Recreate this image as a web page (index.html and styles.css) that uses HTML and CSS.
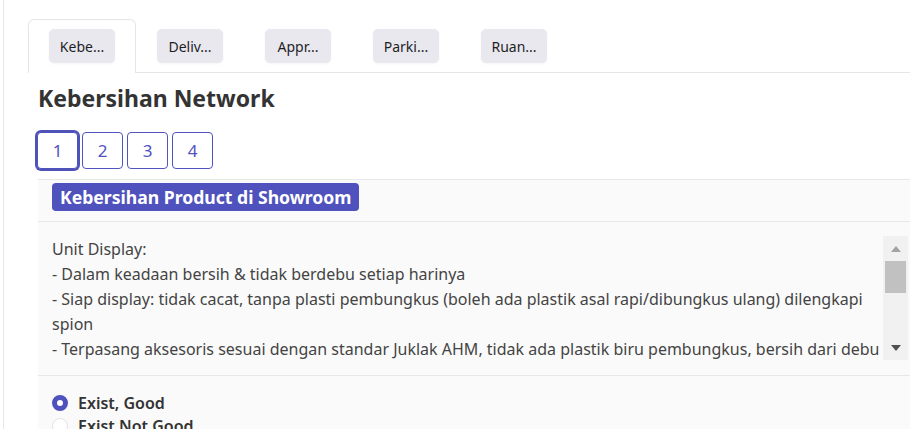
FILE: index.html
```html
<!DOCTYPE html>
<html lang="id">
<head>
<meta charset="utf-8">
<title>Kebersihan Network</title>
<link rel="stylesheet" href="styles.css">
</head>
<body>
<div class="page">
  <div class="tabs">
    <div class="tab active"><span class="tab-btn">Kebe...</span></div>
    <div class="tab"><span class="tab-btn">Deliv...</span></div>
    <div class="tab"><span class="tab-btn">Appr...</span></div>
    <div class="tab"><span class="tab-btn">Parki...</span></div>
    <div class="tab"><span class="tab-btn">Ruan...</span></div>
  </div>
  <div class="panel">
    <h1 class="title">Kebersihan Network</h1>
    <div class="pager">
      <button class="page-btn current">1</button>
      <button class="page-btn">2</button>
      <button class="page-btn">3</button>
      <button class="page-btn">4</button>
    </div>
    <div class="question">
      <div class="q-head"><span class="badge">Kebersihan Product di Showroom</span></div>
      <div class="q-body">
        <div class="desc">Unit Display:<br>- Dalam keadaan bersih &amp; tidak berdebu setiap harinya<br>- Siap display: tidak cacat, tanpa plasti pembungkus (boleh ada plastik asal rapi/dibungkus ulang) dilengkapi spion<br>- Terpasang aksesoris sesuai dengan standar Juklak AHM, tidak ada plastik biru pembungkus, bersih dari debu<br>- Label harga terpasang dengan rapi<br>- Tidak ada goresan pada body unit<br>- Ban dalam kondisi bersih dan hitam<br>- Posisi unit rapi dan sejajar<br>- Lantai di sekitar unit bersih<br>- Brosur tersedia di dekat unit</div>
        <div class="scrollbar" aria-hidden="true">
          <div class="sb-btn">
            <svg width="12" height="8" viewBox="0 0 12 8"><polygon points="6,1 11,7 1,7" fill="#a3a3a3"/></svg>
          </div>
          <div class="sb-track"><div class="sb-thumb"></div></div>
          <div class="sb-btn">
            <svg width="12" height="8" viewBox="0 0 12 8"><polygon points="1,1 11,1 6,7" fill="#505050"/></svg>
          </div>
        </div>
      </div>
      <div class="q-options">
        <label class="option"><span class="radio checked"></span><span class="opt-label">Exist, Good</span></label>
        <label class="option"><span class="radio"></span><span class="opt-label">Exist Not Good</span></label>
      </div>
    </div>
  </div>
</div>
</body>
</html>
```
FILE: styles.css
```css
* { box-sizing: border-box; }
html, body { margin: 0; padding: 0; background: #fff; }
body {
  font-family: "Noto Sans", "Open Sans", sans-serif;
  color: #333;
  overflow: hidden;
  height: 429px;
}
.page {
  margin-left: 3px;
  border-left: 1px solid #e8e8ec;
  height: 429px;
  overflow: hidden;
}
.tabs {
  display: flex;
  margin-left: 24px;
  padding-top: 19px;
  border-bottom: 1px solid #e6e6ea;
}
.tab {
  width: 108px;
  padding: 9px 20px;
  border: 1px solid transparent;
  border-bottom: none;
  border-radius: 6px 6px 0 0;
  display: flex;
}
.tab.active {
  border-color: #e6e6ea;
  background: #fff;
  padding-bottom: 10px;
  margin-bottom: -1px;
}
.tab-btn {
  display: flex;
  align-items: center;
  justify-content: center;
  width: 68px;
  height: 34px;
  background: #e9e8ef;
  border-radius: 5px;
  font-size: 14px;
  color: #1f1f1f;
  box-shadow: 0 1px 3px rgba(0,0,0,0.04);
}
.panel {
  padding-left: 34px;
}
.title {
  margin: 10px 0 0 0;
  font-size: 23px;
  font-weight: 700;
  color: #333;
  line-height: 30px;
}
.pager {
  display: flex;
  gap: 4px;
  margin-top: 19px;
  margin-left: -1px;
}
.page-btn {
  width: 41px;
  height: 37px;
  border: 1px solid #5153bf;
  border-radius: 4px;
  background: #fff;
  color: #5153bf;
  font-family: "Noto Sans", sans-serif;
  font-size: 17px;
  padding: 0;
}
.page-btn.current {
  box-shadow: 0 0 0 2px #4f52b9;
  border-color: #4f52b9;
}
.question {
  margin-top: 10px;
  border-top: 1px solid #e8e8ec;
  background: #fafafa;
  min-height: 260px;
}
.q-head {
  padding: 3px 14px 10px;
  border-bottom: 1px solid #e8e8ec;
}
.badge {
  display: inline-block;
  background: #4f52bd;
  color: #fff;
  font-weight: 700;
  font-size: 17.6px;
  line-height: 28px;
  padding: 0 8px;
  border-radius: 4px;
}
.q-body {
  display: flex;
  padding: 14px 2px 15px 14px;
  border-bottom: 1px solid #e8e8ec;
}
.desc {
  flex: 1;
  height: 124px;
  overflow: hidden;
  padding-top: 1px;
  font-size: 16px;
  line-height: 25px;
  color: #444;
}
.scrollbar {
  width: 25px;
  height: 124px;
  background: #f1f1f1;
  display: flex;
  flex-direction: column;
}
.sb-btn {
  height: 25px;
  display: flex;
  align-items: center;
  justify-content: center;
}
.sb-track {
  flex: 1;
  padding: 0 2px;
}
.sb-thumb {
  height: 32px;
  background: #c1c1c1;
}
.q-options {
  padding: 16px 14px;
  display: flex;
  flex-direction: column;
  gap: 1px;
}
.option {
  display: flex;
  align-items: center;
  gap: 10px;
  height: 22px;
}
.radio {
  width: 16px;
  height: 16px;
  border-radius: 50%;
  border: 1px solid #e3e3e8;
  background: #fff;
}
.radio.checked {
  border: 5px solid #4f52bd;
  background: #fff;
}
.opt-label {
  font-size: 16px;
  font-weight: 600;
  color: #333;
}
```
